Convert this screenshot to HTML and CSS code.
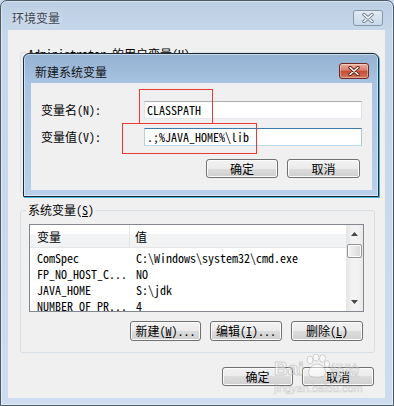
FILE: index.html
```html
<!DOCTYPE html>
<html lang="zh-CN">
  <head>
    <meta charset="UTF-8" />
    <title>环境变量</title>
    <link rel="stylesheet" href="styles.css">
  </head>
  <body>
    <div class="window">
      <div class="titlebar">
        <span class="title">环境变量</span>
        <span class="close-btn inactive">
          <svg width="12" height="10" viewBox="0 0 12 10">
            <path d="M2 1.5 L10 8.5 M10 1.5 L2 8.5" stroke="#6f7f91" stroke-width="3.4" stroke-linecap="round" />
            <path d="M2 1.5 L10 8.5 M10 1.5 L2 8.5" stroke="#fff" stroke-width="1.6" stroke-linecap="round" />
          </svg>
        </span>
      </div>

      <div class="client">
        <div class="group user-group">
          <div class="group-title">Administrator 的用户变量(U)</div>
        </div>

        <div class="group sys-group">
          <div class="group-title">系统变量(<u>S</u>)</div>
          <div class="listview">
            <div class="list-main">
              <div class="list-header">
                <span class="col1">变量</span>
                <span class="col2">值</span>
              </div>
              <div class="list-row"><span class="col1">ComSpec</span><span class="col2">C:\Windows\system32\cmd.exe</span></div>
              <div class="list-row"><span class="col1">FP_NO_HOST_C...</span><span class="col2">NO</span></div>
              <div class="list-row"><span class="col1">JAVA_HOME</span><span class="col2">S:\jdk</span></div>
              <div class="list-row"><span class="col1">NUMBER_OF_PR...</span><span class="col2">4</span></div>
            </div>
            <div class="scrollbar">
              <span class="arrow">
                <svg width="7" height="4" viewBox="0 0 7 4"><path d="M3.5 0 L7 4 L0 4 Z" fill="#4a4a4a" /></svg>
              </span>
              <span class="thumb"></span>
              <span class="track"></span>
              <span class="arrow">
                <svg width="7" height="4" viewBox="0 0 7 4"><path d="M0 0 L7 0 L3.5 4 Z" fill="#4a4a4a" /></svg>
              </span>
            </div>
          </div>
          <div class="btn-row list-buttons">
            <button class="btn btn-new">新建(<u>W</u>)...</button>
            <button class="btn btn-edit">编辑(<u>I</u>)...</button>
            <button class="btn btn-delete">删除(<u>L</u>)</button>
          </div>
        </div>

        <div class="btn-row window-buttons">
          <button class="btn btn-ok">确定</button>
          <button class="btn btn-cancel">取消</button>
        </div>
      </div>
    </div>

    <div class="dialog">
      <div class="dialog-titlebar">
        <span class="dialog-title">新建系统变量</span>
        <span class="close-btn active">
          <svg width="12" height="10" viewBox="0 0 12 10">
            <path d="M2 1.5 L10 8.5 M10 1.5 L2 8.5" stroke="#5c1a10" stroke-width="3.4" stroke-linecap="round" />
            <path d="M2 1.5 L10 8.5 M10 1.5 L2 8.5" stroke="#fff" stroke-width="1.6" stroke-linecap="round" />
          </svg>
        </span>
      </div>
      <div class="dialog-client">
        <div class="field">
          <span class="field-label">变量名(N):</span>
          <div class="input">CLASSPATH</div>
        </div>
        <div class="field">
          <span class="field-label">变量值(V):</span>
          <div class="input focus">.;%JAVA_HOME%\lib</div>
        </div>
        <div class="btn-row dialog-buttons">
          <button class="btn btn-dlg-ok">确定</button>
          <button class="btn btn-dlg-cancel">取消</button>
        </div>
      </div>
    </div>

    <!-- red annotation boxes -->
    <div class="mark mark-name"></div>
    <div class="mark mark-value"></div>

    <div class="watermark">
      <div class="wm-logo">
        <span class="wm-bai">Bai</span>
        <svg class="wm-paw" width="26" height="24" viewBox="0 0 26 24">
          <ellipse cx="6" cy="6" rx="3" ry="4" />
          <ellipse cx="12" cy="3.5" rx="3" ry="3.5" />
          <ellipse cx="18.5" cy="4.5" rx="3" ry="3.8" />
          <ellipse cx="23" cy="10" rx="2.6" ry="3.4" />
          <path d="M5 21 C3 15 9 10 13 10 C18 10 23 15 21 21 C19 24 7 24 5 21 Z" />
        </svg>
        <span class="wm-jy">经验</span>
      </div>
      <div class="wm-url">jingyan.baidu.com</div>
    </div>
  </body>
</html>
```

FILE: styles.css
```css
* {
  box-sizing: border-box;
  margin: 0;
  padding: 0;
}

body {
  width: 394px;
  height: 406px;
  position: relative;
  overflow: hidden;
  font-family: "Noto Sans Mono CJK SC", "Noto Sans CJK SC", sans-serif;
  font-size: 12px;
  line-height: 14px;
  color: #000;
  background: #c9daec;
}

/* outer window (inactive) */
.window {
  width: 394px;
  height: 406px;
  border: 1px solid #4e5966;
  border-radius: 7px 7px 0 0;
  background: linear-gradient(to bottom, #bccee3 0, #c6d7ea 30px, #cddcee 100%);
  box-shadow: inset 0 0 0 1px rgba(255, 255, 255, 0.45);
  padding: 0 8px 7px 7px;
  display: flex;
  flex-direction: column;
}

.titlebar {
  height: 29px;
  padding: 5px 2px 0 4px;
  display: flex;
  align-items: center;
  justify-content: space-between;
}

.title {
  color: #3b4653;
  text-shadow: 0 0 6px rgba(255, 255, 255, 0.8);
}

.close-btn {
  width: 30px;
  height: 16px;
  border-radius: 3px;
  display: flex;
  align-items: center;
  justify-content: center;
}

.close-btn.inactive {
  border: 1px solid #8797aa;
  background: linear-gradient(rgba(255, 255, 255, 0.55), rgba(255, 255, 255, 0.1));
}

.close-btn.active {
  margin-top: -2px;
  border: 1px solid #6e2a22;
  background: linear-gradient(#eab0a2 0, #d8806c 45%, #c44b33 50%, #d3775c 100%);
  box-shadow: inset 0 0 0 1px rgba(255, 255, 255, 0.35);
}

.client {
  flex: 1;
  background: #f0f0f0;
  padding: 22px 10px 0 12px;
  display: flex;
  flex-direction: column;
}

/* group boxes */
.group {
  border: 1px solid #d5dfe5;
  border-radius: 3px;
  padding: 0 10px 11px 8px;
  display: flex;
  flex-direction: column;
}

.group-title {
  align-self: flex-start;
  height: 14px;
  margin: -8px 0 0 -3px;
  padding: 0 2px;
  background: #f0f0f0;
}

.user-group {
  height: 141px;
}

.user-group .group-title {
  margin-top: -6px;
}

.sys-group {
  margin-top: 17px;
}

/* list view */
.listview {
  margin-top: 7px;
  height: 88px;
  border: 1px solid #828790;
  background: #fff;
  display: flex;
}

.list-main {
  flex: 1;
  overflow: hidden;
}

.list-header {
  height: 23px;
  margin-bottom: 2px;
  padding-top: 2px;
  display: flex;
  align-items: center;
  background: linear-gradient(#fff 0, #fff 42%, #f3f4f6 42%, #f1f2f4 100%);
  border-bottom: 1px solid #e5e5e5;
}

.list-header .col1 {
  border-right: 1px solid #e3e4e6;
  align-self: stretch;
  display: flex;
  align-items: center;
  margin-top: -2px;
  padding-top: 2px;
}

.list-header .col2 {
  padding-left: 5px;
}

.col1 {
  width: 100px;
  padding-left: 7px;
  flex-shrink: 0;
}

.col2 {
  padding-left: 6px;
  white-space: nowrap;
}

.list-row {
  height: 16px;
  display: flex;
  align-items: center;
  white-space: nowrap;
}

.scrollbar {
  width: 17px;
  background: linear-gradient(to right, #e4e4e4, #f2f2f2 35%, #f2f2f2 70%, #e9e9e9);
  display: flex;
  flex-direction: column;
  align-items: center;
}

.arrow {
  height: 18px;
  display: flex;
  align-items: center;
  justify-content: center;
}

.thumb {
  width: 15px;
  height: 14px;
  margin-top: 1px;
  border: 1px solid #959595;
  border-radius: 2px;
  background: linear-gradient(to right, #f4f4f4, #e6e6e6 50%, #d8d8d8);
  box-shadow: inset 0 0 0 1px #fbfbfb;
}

.track {
  flex: 1;
}

/* buttons */
.btn-row {
  display: flex;
  justify-content: flex-end;
  gap: 9px;
}

.btn {
  height: 20px;
  font: inherit;
  color: #000;
  border: 1px solid #707070;
  border-radius: 3px;
  background: linear-gradient(#f2f2f2 0, #ebebeb 50%, #dddddd 50%, #cfcfcf 100%);
  box-shadow: inset 0 0 0 1px #fcfcfc;
  line-height: 16px;
}

.list-buttons {
  margin-top: 9px;
  margin-right: 1px;
}

.btn-new {
  width: 71px;
}

.btn-edit,
.btn-delete {
  width: 72px;
}

.window-buttons {
  margin-top: 14px;
  margin-right: 1px;
}

.window-buttons .btn {
  height: 19px;
}

.btn-ok {
  width: 71px;
}

.btn-cancel {
  width: 72px;
}

/* new variable dialog (active, on top) */
.dialog {
  position: absolute;
  left: 23px;
  top: 53px;
  width: 356px;
  height: 144px;
  border: 1px solid #1f2a36;
  border-radius: 6px 6px 0 0;
  background: linear-gradient(to bottom, #93b1d1 0, #a9c4e2 30px, #b8d0ea 100%);
  box-shadow: 1px 1px 0 #47b6da, inset 0 0 0 1px rgba(255, 255, 255, 0.5);
  padding: 0 6px 6px 7px;
  display: flex;
  flex-direction: column;
}

.dialog-titlebar {
  height: 29px;
  padding: 7px 3px 0 4px;
  display: flex;
  align-items: center;
  justify-content: space-between;
}

.dialog-title {
  color: #111;
}

.dialog-client {
  flex: 1;
  background: #f0f0f0;
  padding: 18px 10px 0 10px;
  display: flex;
  flex-direction: column;
}

.field {
  height: 18px;
  display: flex;
  align-items: center;
}

.field + .field {
  margin-top: 9px;
}

.field-label {
  width: 103px;
  flex-shrink: 0;
}

.input {
  flex: 1;
  height: 18px;
  border: 1px solid;
  border-color: #abadb3 #dbdfe6 #e3e9ef #e2e3ea;
  background: #fff;
  padding: 0 2px;
  line-height: 16px;
  white-space: nowrap;
}

.input.focus {
  border-color: #3d7bad #a4c9e3 #b7d9ed #b5cfe7;
}

.dialog-buttons {
  margin-top: 13px;
  margin-right: 2px;
}

.dialog-buttons .btn {
  height: 19px;
}

.btn-dlg-ok {
  width: 72px;
}

.btn-dlg-cancel {
  width: 73px;
}

/* annotations */
.mark {
  position: absolute;
  border: 1px solid #ee3838;
}

.mark-name {
  left: 139px;
  top: 89px;
  width: 74px;
  height: 35px;
}

.mark-value {
  left: 122px;
  top: 123px;
  width: 135px;
  height: 31px;
}

/* baidu watermark */
.watermark {
  position: absolute;
  left: 274px;
  top: 352px;
  width: 92px;
  opacity: 0.55;
  pointer-events: none;
}

.wm-logo {
  display: flex;
  align-items: flex-end;
  height: 26px;
}

.wm-bai {
  font-family: "Liberation Sans", sans-serif;
  font-weight: bold;
  font-size: 19px;
  line-height: 19px;
  color: #fff;
  -webkit-text-stroke: 1px #b4b4b4;
}

.wm-paw {
  fill: #fff;
  stroke: #b4b4b4;
  stroke-width: 1;
}

.wm-jy {
  font-family: "Noto Sans CJK SC", sans-serif;
  font-size: 15px;
  line-height: 17px;
  color: #fff;
  -webkit-text-stroke: 0.6px #b4b4b4;
}

.wm-url {
  margin-top: 4px;
  font-family: "Liberation Sans", sans-serif;
  font-size: 11px;
  line-height: 12px;
  color: #fff;
  -webkit-text-stroke: 0.5px #b4b4b4;
}
```
